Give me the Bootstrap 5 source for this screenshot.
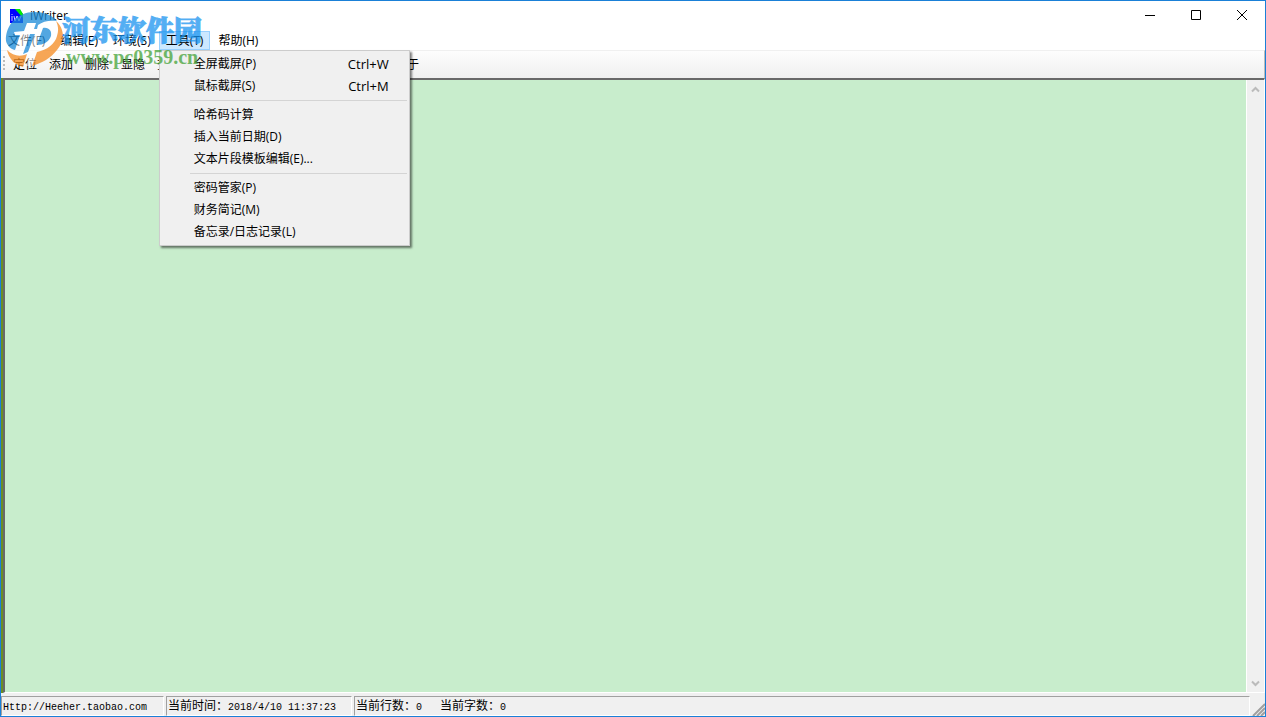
<!DOCTYPE html>
<html lang="zh-CN">
<head>
<meta charset="utf-8">
<meta name="viewport" content="width=device-width, initial-scale=1">
<title>iWriter</title>
<link href="https://cdn.jsdelivr.net/npm/bootstrap@5.3.0/dist/css/bootstrap.min.css" rel="stylesheet">
<style>
body { font-family: "Open Sans", "Noto Sans CJK SC", sans-serif; font-size: 12px; line-height: 16px; color: #000; background: #f0f0f0; }
button { font: inherit; color: inherit; background: none; border: 0; padding: 0; }
.app-window { border: 1px solid #1a80d7; }
.title-bar { height: 30px; background: #fff; padding-left: 9px; }
.title-bar .caption { margin-left: 6px; line-height: 30px; }
.win-btn { width: 46px; height: 28px; display: flex; align-items: center; justify-content: center; }
.menu-bar { height: 19px; background: #fff; gap: 1px; }
.menu-bar .top-item { height: 19px; padding: 0 6px; border: 1px solid transparent; display: flex; align-items: center; }
.menu-bar .top-item.show { background: #cce8ff; border-color: #99d1ff; }
.tool-bar { height: 28px; background: linear-gradient(#fdfdfd, #f0f0f0); border-top: 1px solid #f0f0f0; border-right: 1px solid #bbb; padding-left: 12px; gap: 12px; }
.grip { left: 2px; top: 5px; width: 2px; height: 16px; background: repeating-linear-gradient(#bbb 0 2px, transparent 2px 4px); }
.tool-gap { width: 190px; }
.drop { left: 0; top: 19px; width: 251px; padding: 2px; background: #f0f0f0; border: 1px solid #ccc; box-shadow: 2px 2px 2px rgba(0,0,0,.5); z-index: 5; }
.drop button { display: flex; justify-content: space-between; width: 100%; height: 22px; padding: 0 18px 0 32px; align-items: center; }
.drop .shortcut { font-size: 13px; }
.drop hr { margin: 3px 0 3px 28px; border: 0; height: 1px; background: #d4d4d4; opacity: 1; }
.editor-frame { border-left: 2px solid #6b8e23; }
.editor-inner { border: 1px solid #fff; border-top: 2px solid #696969; border-left: 2px solid #696969; background: #c8edcc; }
.editor-inner textarea { border: 0; background: #c8edcc; resize: none; outline: 0; overflow: hidden; }
.scroll-col { width: 18px; background: #f0f0f0; border-left: 1px solid #fff; padding: 6px 0 5px; }
.status-bar { height: 23px; padding-top: 3px; gap: 2px; background: #f0f0f0; }
.status-cell { border: 1px solid #a0a0a0; border-right-color: #fff; border-bottom-color: #fff; padding-left: 1px; font-family: "Liberation Mono", "Noto Sans CJK SC", monospace; white-space: pre; line-height: 20px; }
.status-cell .fixed { font-size: 10px; }
.cell-url { width: 163px; }
.cell-time { width: 186px; }
.size-grip { width: 13px; }
.watermark { left: 3px; top: 8px; z-index: 10; pointer-events: none; opacity: .75; }
.wm-name { left: 58px; top: 4px; font: 900 28px/32px "Noto Serif CJK SC", "Noto Sans CJK SC", serif; color: #1a94f0; -webkit-text-stroke: 1px #1a94f0; }
.wm-url { left: 62px; top: 36px; font: 700 20px/24px "Liberation Serif", serif; color: #45a33a; }
</style>
</head>
<body>
<div class="app-window vh-100 d-flex flex-column position-relative">
  <header class="title-bar d-flex">
    <svg class="mt-2" width="14" height="15" viewBox="0 0 14 15"><path d="M0 0h9l4 5v9H0z" fill="#00f"/><path d="M5 0h5l3 5v4z" fill="#0e0"/><path d="M2 5v1M2 7v5M4 7l1 5 2-5 2 5 2-5" stroke="#ccf" fill="none"/></svg>
    <div class="caption">iWriter</div>
    <div class="d-flex ms-auto">
      <button class="win-btn" aria-label="最小化"><svg width="10" height="10"><path d="M0 5.5h10" stroke="#000"/></svg></button>
      <button class="win-btn" aria-label="最大化"><svg width="10" height="10"><path d="M.5.5h9v9h-9z" stroke="#000" fill="none"/></svg></button>
      <button class="win-btn" aria-label="关闭"><svg width="10" height="10"><path d="M0 0l10 10M10 0L0 10" stroke="#000" fill="none"/></svg></button>
    </div>
  </header>
  <nav class="menu-bar d-flex">
    <button class="top-item">文件(F)</button>
    <button class="top-item">编辑(E)</button>
    <button class="top-item">环境(S)</button>
    <div class="position-relative">
      <button class="top-item show">工具(T)</button>
      <div class="drop position-absolute">
        <button><span>全屏截屏(P)</span><span class="shortcut">Ctrl+W</span></button>
        <button><span>鼠标截屏(S)</span><span class="shortcut">Ctrl+M</span></button>
        <hr>
        <button>哈希码计算</button>
        <button>插入当前日期(D)</button>
        <button>文本片段模板编辑(E)...</button>
        <hr>
        <button>密码管家(P)</button>
        <button>财务简记(M)</button>
        <button>备忘录/日志记录(L)</button>
      </div>
    </div>
    <button class="top-item">帮助(H)</button>
  </nav>
  <div class="tool-bar d-flex align-items-center position-relative">
    <span class="grip position-absolute"></span>
    <button>定位</button><button>添加</button><button>删除</button><button>显隐</button><button>查找</button>
    <span class="tool-gap"></span>
    <button>关于</button>
  </div>
  <main class="editor-frame flex-grow-1 d-flex">
    <div class="editor-inner flex-grow-1 d-flex">
      <textarea class="flex-grow-1" aria-label="正文"></textarea>
      <div class="scroll-col d-flex flex-column justify-content-between align-items-center">
        <svg width="9" height="7"><path d="M1 5.500l3.500-3.500L8 5.500" stroke="#bbb" stroke-width="2" fill="none"/></svg>
        <svg width="9" height="7"><path d="M1 1.500l3.500 3.500L8 1.500" stroke="#bbb" stroke-width="2" fill="none"/></svg>
      </div>
    </div>
  </main>
  <footer class="status-bar d-flex">
    <div class="status-cell cell-url"><span class="fixed">Http://Heeher.taobao.com</span></div>
    <div class="status-cell cell-time">当前时间：<span class="fixed">2018/4/10 11:37:23</span></div>
    <div class="status-cell flex-grow-1">当前行数：<span class="fixed">0   </span>当前字数：<span class="fixed">0</span></div>
    <svg class="size-grip align-self-end" height="13" viewBox="0 0 13 13"><path d="M1 13L13 1M5 13l8-8M9 13l4-4" stroke="#a0a0a0" stroke-width="2"/></svg>
  </footer>
  <div class="watermark position-absolute text-nowrap">
    <svg width="60" height="60" viewBox="0 0 60 60">
      <path d="M6 22h10l3-8h10l-2 6h14l10 5-2 14-14 6-5 12H22l3-10-8 2H5z" fill="#fff" opacity=".7"/>
      <path d="M2 32C1 16 14 3 30 3c10 0 18 3 23 9-7-1-14 0-19 4l-1 4h-3l2-6h-9l-3 8-10 1 1 3h5l-5 15C6 40 3 36 2 32z" fill="#1a8ad8"/>
      <path d="M39 19c6-1 9 3 8 8-2 6-8 9-14 9l2-6h-6l-5 13-5 2 7-20h5l-2 5h6z" fill="#1a8ad8"/>
      <path d="M52 12c9 8 9 20 1 29-6 8-15 13-25 16l5-14c10-2 18-8 20-16 2-6 1-11-1-15z" fill="#f58a1f"/>
      <path d="M3 41c6 6 13 7 20 4l-4 13C11 56 5 50 3 41z" fill="#f58a1f"/>
    </svg>
    <div class="wm-name position-absolute">河东软件园</div>
    <div class="wm-url position-absolute">www.pc0359.cn</div>
  </div>
</div>
<script src="https://cdn.jsdelivr.net/npm/bootstrap@5.3.0/dist/js/bootstrap.bundle.min.js"></script>
</body>
</html>
